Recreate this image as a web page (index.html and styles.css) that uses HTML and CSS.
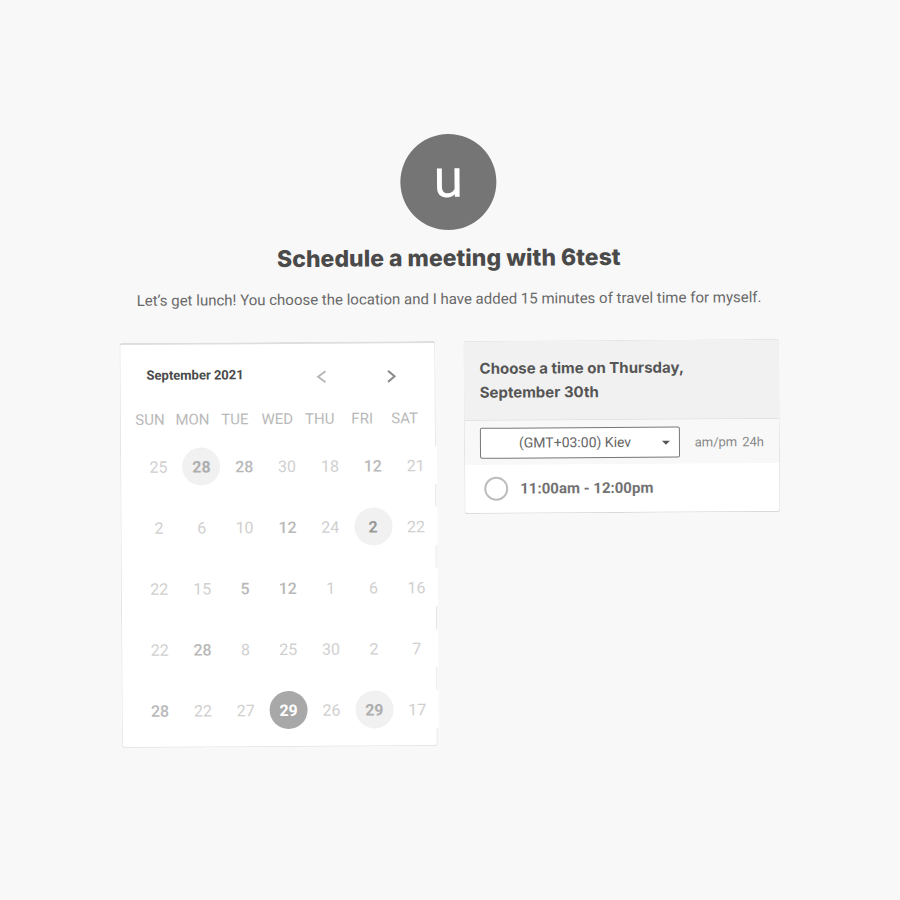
FILE: index.html
```html
<!DOCTYPE html>
<html lang="en">
<head>
<meta charset="utf-8">
<meta name="viewport" content="width=device-width, initial-scale=1">
<title>Schedule a meeting with 6test</title>
<link rel="stylesheet" href="styles.css">
</head>
<body>
<main class="page">
  <header class="intro">
    <div class="avatar">u</div>
    <h1 class="title">Schedule a meeting with 6test</h1>
    <p class="lead">Let’s get lunch! You choose the location and I have added 15 minutes of travel time for myself.</p>
  </header>
  <div class="panels">
    <section class="card calendar">
      <div class="month-bar">
        <h2 class="month">September 2021</h2>
        <div class="month-nav">
          <button type="button" class="arrow" aria-label="Previous month"><svg width="12" height="14" viewBox="0 0 12 14"><path d="M10 1.500 2.500 7l7.500 5.500"/></svg></button>
          <button type="button" class="arrow next" aria-label="Next month"><svg width="12" height="14" viewBox="0 0 12 14"><path d="M2.500 1.500 9 7l-6.500 5.500"/></svg></button>
        </div>
      </div>
      <table class="days">
        <thead>
          <tr><th>SUN</th><th>MON</th><th>TUE</th><th>WED</th><th>THU</th><th>FRI</th><th>SAT</th></tr>
        </thead>
        <tbody>
          <tr><td><button class="day">25</button></td><td><button class="day open marked">28</button></td><td><button class="day open">28</button></td><td><button class="day">30</button></td><td><button class="day">18</button></td><td><button class="day open">12</button></td><td><button class="day">21</button></td></tr>
          <tr><td><button class="day">2</button></td><td><button class="day">6</button></td><td><button class="day">10</button></td><td><button class="day open">12</button></td><td><button class="day">24</button></td><td><button class="day open marked strong">2</button></td><td><button class="day">22</button></td></tr>
          <tr><td><button class="day">22</button></td><td><button class="day">15</button></td><td><button class="day open">5</button></td><td><button class="day open">12</button></td><td><button class="day">1</button></td><td><button class="day">6</button></td><td><button class="day">16</button></td></tr>
          <tr><td><button class="day">22</button></td><td><button class="day open">28</button></td><td><button class="day">8</button></td><td><button class="day">25</button></td><td><button class="day">30</button></td><td><button class="day">2</button></td><td><button class="day">7</button></td></tr>
          <tr><td><button class="day open">28</button></td><td><button class="day">22</button></td><td><button class="day">27</button></td><td><button class="day open selected">29</button></td><td><button class="day">26</button></td><td><button class="day open marked">29</button></td><td><button class="day">17</button></td></tr>
        </tbody>
      </table>
    </section>
    <section class="card times">
      <h2 class="times-title">Choose a time on Thursday, September 30th</h2>
      <div class="zone-bar">
        <div class="zone">
          <select class="zone-select" aria-label="Time zone"><option>(GMT+03:00) Kiev</option></select>
        </div>
        <div class="formats">
          <button type="button" class="format">am/pm</button>
          <button type="button" class="format">24h</button>
        </div>
      </div>
      <label class="slot"><input type="radio" name="slot" class="slot-radio">11:00am - 12:00pm</label>
    </section>
  </div>
</main>
</body>
</html>
```
FILE: styles.css
```css
* { box-sizing: border-box; }

body {
  margin: 0;
  background: #f8f8f8;
  color: #4a4a4a;
  font-family: Roboto, "Liberation Sans", sans-serif;
  font-size: 16px;
}

button {
  padding: 0;
  border: 0;
  background: none;
  color: inherit;
  font: inherit;
}

.page {
  max-width: 660px;
  margin: 0 auto;
  padding: 134px 0 154px;
  transform: rotate(-0.35deg);
}

.intro { text-align: center; }

.avatar {
  width: 96px;
  height: 96px;
  margin: 0 auto 12px;
  border-radius: 50%;
  background: #757575;
  color: #fff;
  font-size: 54px;
  line-height: 90px;
}

.title {
  margin: 0 0 13px;
  font-family: Inter, sans-serif;
  font-size: 23px;
  font-weight: 800;
  line-height: 32px;
}

.lead {
  margin: 0 0 30px;
  color: #696969;
  font-size: 15px;
  line-height: 24px;
}

.panels {
  display: grid;
  grid-template-columns: repeat(auto-fit, minmax(300px, 1fr));
  align-items: start;
  gap: 28px;
}

.card {
  border: 1px solid #e5e5e5;
  border-radius: 3px;
  background: #fff;
}

.calendar {
  padding: 16px 0 17px 16px;
  border-top: 2px solid #dedede;
}

.month-bar {
  display: flex;
  align-items: center;
  justify-content: space-between;
  height: 28px;
  margin-bottom: 21px;
  padding: 0 31px 0 10px;
}

.month {
  margin: 0;
  font-size: 13px;
  font-weight: 700;
}

.month-nav {
  display: flex;
  gap: 46px;
}

.arrow {
  display: flex;
  align-items: center;
  justify-content: center;
  width: 24px;
  height: 28px;
  padding-top: 6px;
  color: #b8b8b8;
}

.arrow.next { color: #8c8c8c; }

.arrow path {
  fill: none;
  stroke: currentColor;
  stroke-width: 2;
}

.days {
  display: block;
  margin-right: -2px;
}

.days thead,
.days tbody { display: block; }

.days tr {
  display: grid;
  grid-template-columns: repeat(7, 1fr);
}

.days thead {
  margin: 0 11px 18px -8px;
}

.days th {
  padding: 0;
  color: #b9b9b9;
  font-size: 15px;
  font-weight: 400;
  line-height: 20px;
}

.days tbody {
  display: grid;
  gap: 23px;
}

.days td {
  padding: 0;
  background: #fff;
  text-align: center;
}

.day {
  display: block;
  width: 38px;
  height: 38px;
  margin: 0 auto;
  border-radius: 50%;
  color: #d0d0d0;
}

.day.open {
  color: #b9b9b9;
  font-weight: 500;
}

.day.marked {
  background: #f1f1f1;
  color: #aeaeae;
  font-weight: 700;
}

.day.strong { color: #999; }

.day.selected {
  background: #a8a8a8;
  color: #fff;
  font-weight: 700;
}

.times { border-bottom-color: #d9d9d9; }

.times-title {
  margin: 0;
  padding: 15px;
  border-bottom: 1px solid #e2e2e2;
  background: #f1f1f1;
  color: #555;
  font-family: Inter, sans-serif;
  font-size: 15px;
  font-weight: 700;
  line-height: 24px;
}

.zone-bar {
  display: flex;
  align-items: center;
  gap: 15px;
  height: 44px;
  padding: 0 15px;
  background: #f8f8f8;
}

.zone {
  position: relative;
  flex: 1;
}

.zone::after {
  content: "";
  position: absolute;
  top: 14px;
  right: 10px;
  border: 4px solid transparent;
  border-top-color: #555;
  border-bottom: 0;
}

.zone-select {
  display: block;
  width: 100%;
  height: 31px;
  padding: 0 20px 0 38px;
  appearance: none;
  border: 1px solid #777;
  border-radius: 2px;
  background: #fff;
  color: #666;
  font: 14px Roboto, sans-serif;
}

.formats {
  display: flex;
  gap: 5px;
  color: #888;
  font-size: 13px;
}

.slot {
  display: flex;
  align-items: center;
  gap: 12px;
  height: 48px;
  padding: 0 19px;
  color: #737373;
  font-size: 15px;
  font-weight: 700;
}

.slot-radio {
  width: 24px;
  height: 24px;
  margin: 0;
  appearance: none;
  border: 2px solid #bdbdbd;
  border-radius: 50%;
}
```
